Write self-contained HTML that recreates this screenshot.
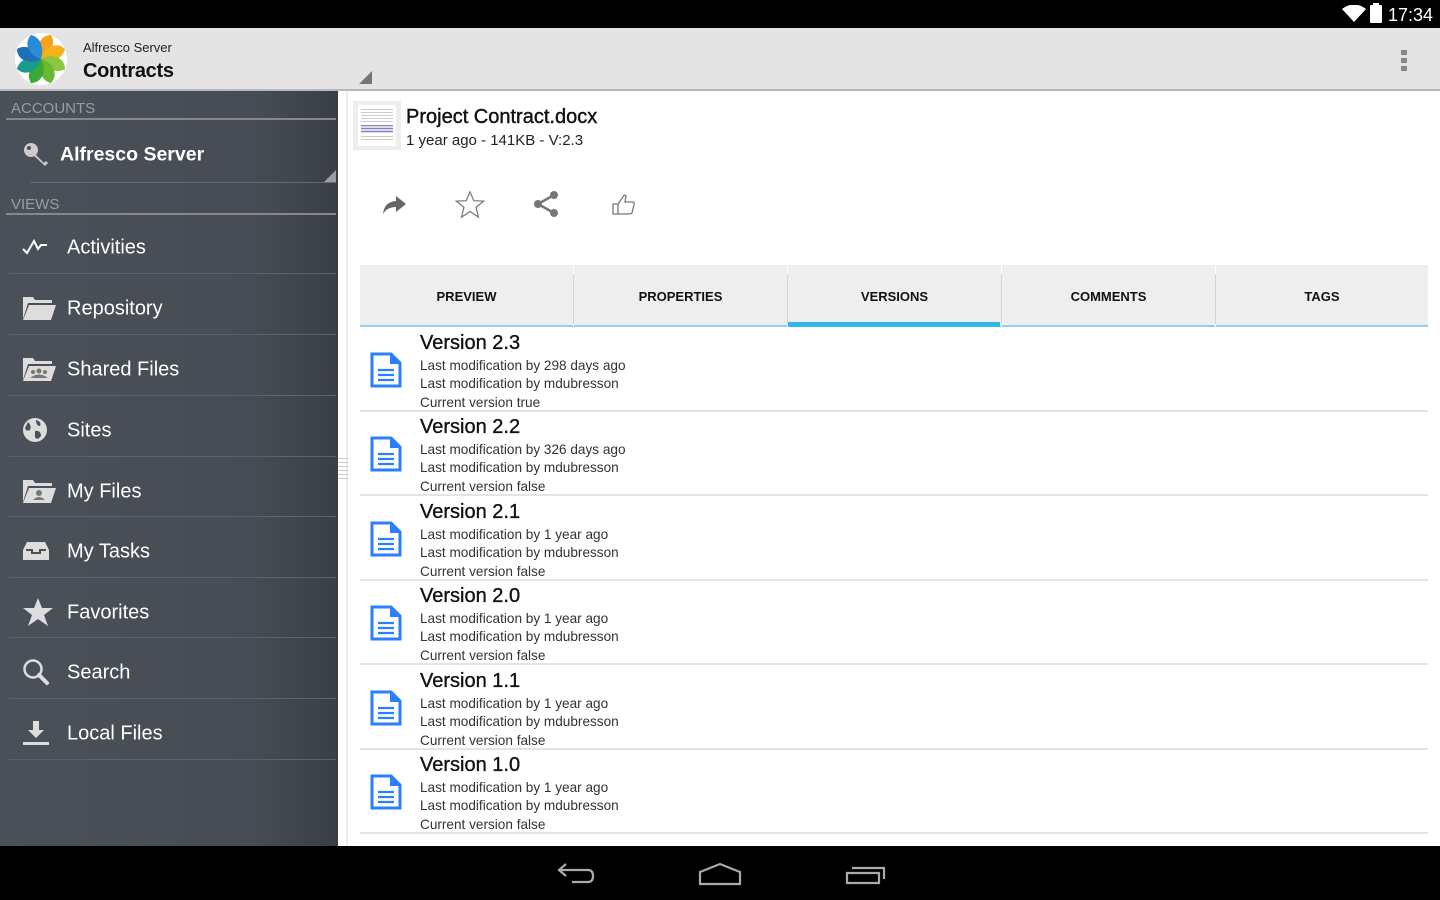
<!DOCTYPE html>
<html><head><meta charset="utf-8"><style>
*{margin:0;padding:0;box-sizing:border-box}
body{width:1440px;height:900px;overflow:hidden;position:relative;font-family:"Liberation Sans",sans-serif;background:#fff}
.a{position:absolute}
#status{left:0;top:0;width:1440px;height:28px;background:#000}
#bar{left:0;top:28px;width:1440px;height:63px;background:#e4e4e4;border-bottom:2px solid #b8b8b8}
#side{left:0;top:91px;width:338px;height:755px;background:linear-gradient(90deg,#4b5159 0%,#474c54 75%,#3a3e45 100%)}
.sec{color:#9a9ea4;font-size:15px;left:11px}
.hl{left:6px;width:330px;height:2px;background:#85898f}
.item{left:0;width:338px;height:61px;color:#fff;font-size:20px}
.item span{position:absolute;left:67px;top:50%;transform:translateY(-45%)}
.item svg{position:absolute;left:22px;top:50%;transform:translateY(-50%)}
.sep{left:9px;width:327px;height:1px;background:#5d636b}
#gut{left:338px;top:91px;width:10px;height:755px;background:#fff;border-right:2px solid #ececec}
#nav{left:0;top:846px;width:1440px;height:54px;background:#000}
.tab{top:265px;height:62px;width:213px;background:#eee;font-size:13px;font-weight:bold;color:#111;text-align:center;line-height:64px}
.tab:after{content:"";position:absolute;left:0;right:0;bottom:0;height:2px;background:#8ed0ee}
.ver{left:360px;width:1068px;height:84px;border-bottom:2px solid #e4e4e4}
.ver .t{position:absolute;left:60px;top:4px;font-size:20px;color:#111;-webkit-text-stroke:.35px #111}
.ver .l{position:absolute;left:60px;font-size:13.6px;color:#333}
.ver svg{position:absolute;left:10px;top:24px}
</style></head><body>
<div class="a" id="status"></div>
<svg class="a" style="left:1342px;top:5px" width="24" height="18" viewBox="0 0 24 18"><path d="M12 17L0 4Q12-5 24 4Z" fill="#fff"/></svg>
<div class="a" style="left:1370px;top:5px;width:12px;height:18px;background:#fff;border-radius:1px"></div>
<div class="a" style="left:1373px;top:3px;width:6px;height:3px;background:#fff"></div>
<div class="a" style="left:1388px;top:5px;color:#fff;font-size:18px">17:34</div>

<div class="a" id="bar"></div>
<svg class="a" style="left:14px;top:32px" width="54" height="54" viewBox="-27 -27 54 54">
<circle r="26" fill="#fff"/>
<g>
<path d="M0 0 C-6 -10 -2 -24 10 -24 C16 -14 8 -4 0 0Z" fill="#f5a31a"/>
<path d="M0 0 C-6 -10 -2 -24 10 -24 C16 -14 8 -4 0 0Z" fill="#f5b21a" transform="rotate(45)"/>
<path d="M0 0 C-6 -10 -2 -24 10 -24 C16 -14 8 -4 0 0Z" fill="#8cc63f" transform="rotate(90)"/>
<path d="M0 0 C-6 -10 -2 -24 10 -24 C16 -14 8 -4 0 0Z" fill="#6ab82d" transform="rotate(135)"/>
<path d="M0 0 C-6 -10 -2 -24 10 -24 C16 -14 8 -4 0 0Z" fill="#3aa935" transform="rotate(180)"/>
<path d="M0 0 C-6 -10 -2 -24 10 -24 C16 -14 8 -4 0 0Z" fill="#1a9c8c" transform="rotate(225)"/>
<path d="M0 0 C-6 -10 -2 -24 10 -24 C16 -14 8 -4 0 0Z" fill="#1d6fb8" transform="rotate(270)"/>
<path d="M0 0 C-6 -10 -2 -24 10 -24 C16 -14 8 -4 0 0Z" fill="#2a8dd4" transform="rotate(315)"/>
</g></svg>
<div class="a" style="left:83px;top:40px;font-size:13px;color:#222">Alfresco Server</div>
<div class="a" style="left:83px;top:60px;font-size:20px;font-weight:bold;color:#111;letter-spacing:-0.3px">Contracts</div>
<svg class="a" style="left:359px;top:71px" width="13" height="13"><path d="M13 0V13H0Z" fill="#777"/></svg>
<div class="a" style="left:1401px;top:50px;width:6px;height:5px;background:#888"></div>
<div class="a" style="left:1401px;top:58px;width:6px;height:5px;background:#888"></div>
<div class="a" style="left:1401px;top:66px;width:6px;height:5px;background:#888"></div>

<div class="a" id="side"></div>
<div class="a sec" style="top:100px">ACCOUNTS</div>
<div class="a hl" style="top:118px"></div>
<div class="a item" style="top:123px;font-weight:bold;font-size:19.5px"><svg width="26" height="26" viewBox="0 0 26 26"><circle cx="9" cy="9" r="7" fill="#ccc"/><path d="M12 12L22 22L24 20L26 22L23 25L11 14Z" fill="#ccc"/><circle cx="7" cy="7" r="2" fill="#4b5159"/></svg><span style="left:60px">Alfresco Server</span></div>
<div class="a sep" style="top:182px;left:30px;width:306px;background:#666c73"></div>
<svg class="a" style="left:324px;top:170px" width="12" height="12"><path d="M12 0V12H0Z" fill="#9a9ea4"/></svg>
<div class="a sec" style="top:196px">VIEWS</div>
<div class="a hl" style="top:213px"></div>

<div class="a item" style="top:216px"><svg width="26" height="20" viewBox="0 0 26 20"><path d="M1 12L5 16L12 4L16 12L19 8H25" stroke="#fff" stroke-width="2" fill="none"/></svg><span>Activities</span></div>
<div class="a sep" style="top:273px"></div>
<div class="a item" style="top:277px"><svg width="34" height="24" viewBox="0 0 34 24"><path d="M1 1H11L13 4H30V7H6L1 23Z" fill="#ddd"/><path d="M7 9H34L29 24H1Z" fill="#ddd"/></svg><span>Repository</span></div>
<div class="a sep" style="top:334px"></div>
<div class="a item" style="top:338px"><svg width="34" height="24" viewBox="0 0 34 24"><path d="M1 1H11L13 4H30V7H6L1 23Z" fill="#ddd"/><path d="M7 9H34L29 24H1Z" fill="#ddd"/><circle cx="17" cy="14" r="2.5" fill="#777"/><circle cx="11" cy="15" r="2" fill="#777"/><circle cx="23" cy="15" r="2" fill="#777"/><path d="M8 21Q17 14 26 21Z" fill="#777"/></svg><span>Shared Files</span></div>
<div class="a sep" style="top:395px"></div>
<div class="a item" style="top:399px"><svg width="26" height="26" viewBox="0 0 26 26"><circle cx="13" cy="13" r="12" fill="#ddd"/><path d="M6 5Q10 9 8 13Q4 15 3 11Z M14 3Q20 5 18 9Q14 9 14 3Z M13 14Q19 13 19 19Q15 24 13 20Z" fill="#4b5159"/></svg><span>Sites</span></div>
<div class="a sep" style="top:456px"></div>
<div class="a item" style="top:460px"><svg width="34" height="24" viewBox="0 0 34 24"><path d="M1 1H11L13 4H30V7H6L1 23Z" fill="#ddd"/><path d="M7 9H34L29 24H1Z" fill="#ddd"/><circle cx="17" cy="14" r="3" fill="#777"/><path d="M11 21Q17 15 23 21Z" fill="#777"/></svg><span>My Files</span></div>
<div class="a sep" style="top:516px"></div>
<div class="a item" style="top:520px"><svg width="28" height="20" viewBox="0 0 28 20"><path d="M5 1H23L27 9V19H1V9Z" fill="#ddd"/><path d="M4 9H10V12H18V9H24" stroke="#4b5159" stroke-width="2" fill="none"/></svg><span>My Tasks</span></div>
<div class="a sep" style="top:577px"></div>
<div class="a item" style="top:581px"><svg width="32" height="30" viewBox="0 0 32 30"><path d="M16 1L20 11L31 11L22 18L26 29L16 22L6 29L10 18L1 11L12 11Z" fill="#ddd"/></svg><span>Favorites</span></div>
<div class="a sep" style="top:637px"></div>
<div class="a item" style="top:641px"><svg width="28" height="28" viewBox="0 0 28 28"><circle cx="11" cy="11" r="8.5" stroke="#ddd" stroke-width="2.5" fill="none"/><path d="M17 17L25 25" stroke="#ddd" stroke-width="4" stroke-linecap="round"/></svg><span>Search</span></div>
<div class="a sep" style="top:698px"></div>
<div class="a item" style="top:702px"><svg width="28" height="26" viewBox="0 0 28 26"><path d="M11 1H17V10H22L14 18L6 10H11Z" fill="#ddd"/><rect x="1" y="22" width="26" height="3" fill="#ddd"/></svg><span>Local Files</span></div>
<div class="a sep" style="top:759px"></div>

<div class="a" id="gut"></div>
<div class="a" style="left:338px;top:458px;width:10px;height:22px;background:repeating-linear-gradient(#ccc 0 1px,transparent 1px 4px)"></div>

<div class="a" style="left:353px;top:101px;width:48px;height:49px;background:#eee;padding:4px 5px"><div style="width:100%;height:100%;background:#fff;padding:4px 3px"><div style="height:13px;background:repeating-linear-gradient(#ccc 0 1px,transparent 1px 3px)"></div><div style="height:8px;margin-top:3px;background:repeating-linear-gradient(#8080d0 0 1px,#ddd 1px 3px)"></div><div style="height:5px;margin-top:3px;background:repeating-linear-gradient(#ccc 0 1px,transparent 1px 3px)"></div></div></div>
<div class="a" style="left:406px;top:106px;font-size:20px;color:#111;-webkit-text-stroke:.4px #111">Project Contract.docx</div>
<div class="a" style="left:406px;top:132px;font-size:15px;color:#222">1 year ago - 141KB - V:2.3</div>

<svg class="a" style="left:381px;top:193px" width="26" height="24" viewBox="0 0 26 24"><path d="M15 3L25 11L15 19V14Q6 14 2 21Q3 9 15 8Z" fill="#666"/></svg>
<svg class="a" style="left:455px;top:189px" width="30" height="30" viewBox="0 0 32 30"><path d="M16 2L20 11.5L30.5 12L22.5 18.5L25 29L16 23L7 29L9.5 18.5L1.5 12L12 11.5Z" fill="none" stroke="#777" stroke-width="1.3"/></svg>
<svg class="a" style="left:533px;top:190px" width="28" height="28" viewBox="0 0 28 28"><path d="M5 14L21 5M5 14L21 23" stroke="#777" stroke-width="2.5"/><circle cx="5" cy="14" r="4" fill="#777"/><circle cx="21" cy="5" r="4" fill="#777"/><circle cx="21" cy="23" r="4" fill="#777"/></svg>
<svg class="a" style="left:612px;top:194px" width="24" height="22" viewBox="0 0 24 22"><path d="M1 10H6V20H1Z M6 10L11 3Q12 0 14 2L13 8H21Q23 9 22 11L20 19Q19 20 17 20H6" fill="none" stroke="#777" stroke-width="1.3"/></svg>

<div class="a tab" style="left:360px">PREVIEW</div>
<div class="a tab" style="left:574px">PROPERTIES</div>
<div class="a tab" style="left:788px">VERSIONS</div>
<div class="a tab" style="left:1002px">COMMENTS</div>
<div class="a tab" style="left:1216px;width:212px">TAGS</div>
<div class="a" style="left:573px;top:274px;width:1px;height:50px;background:#d4d4d4"></div>
<div class="a" style="left:787px;top:274px;width:1px;height:50px;background:#d4d4d4"></div>
<div class="a" style="left:1001px;top:274px;width:1px;height:50px;background:#d4d4d4"></div>
<div class="a" style="left:1215px;top:274px;width:1px;height:50px;background:#d4d4d4"></div>
<div class="a" style="left:788px;top:322px;width:212px;height:5px;background:#33b5e5"></div>

<div class="a ver" style="top:328px"><svg width="32" height="36" viewBox="0 0 32 36"><path d="M2 2H21L30 11V34H2Z" fill="#fff" stroke="#2a7fff" stroke-width="3"/><path d="M20 2V12H30Z" fill="#2a7fff"/><path d="M8 18H24M8 23H24M8 28H24" stroke="#2a7fff" stroke-width="2.2"/></svg><div class="t">Version 2.3</div><div class="l" style="top:30px">Last modification by 298 days ago</div><div class="l" style="top:48px">Last modification by mdubresson</div><div class="l" style="top:67px">Current version true</div></div>
<div class="a ver" style="top:412px"><svg width="32" height="36" viewBox="0 0 32 36"><path d="M2 2H21L30 11V34H2Z" fill="#fff" stroke="#2a7fff" stroke-width="3"/><path d="M20 2V12H30Z" fill="#2a7fff"/><path d="M8 18H24M8 23H24M8 28H24" stroke="#2a7fff" stroke-width="2.2"/></svg><div class="t">Version 2.2</div><div class="l" style="top:30px">Last modification by 326 days ago</div><div class="l" style="top:48px">Last modification by mdubresson</div><div class="l" style="top:67px">Current version false</div></div>
<div class="a ver" style="top:497px"><svg width="32" height="36" viewBox="0 0 32 36"><path d="M2 2H21L30 11V34H2Z" fill="#fff" stroke="#2a7fff" stroke-width="3"/><path d="M20 2V12H30Z" fill="#2a7fff"/><path d="M8 18H24M8 23H24M8 28H24" stroke="#2a7fff" stroke-width="2.2"/></svg><div class="t">Version 2.1</div><div class="l" style="top:30px">Last modification by 1 year ago</div><div class="l" style="top:48px">Last modification by mdubresson</div><div class="l" style="top:67px">Current version false</div></div>
<div class="a ver" style="top:581px"><svg width="32" height="36" viewBox="0 0 32 36"><path d="M2 2H21L30 11V34H2Z" fill="#fff" stroke="#2a7fff" stroke-width="3"/><path d="M20 2V12H30Z" fill="#2a7fff"/><path d="M8 18H24M8 23H24M8 28H24" stroke="#2a7fff" stroke-width="2.2"/></svg><div class="t">Version 2.0</div><div class="l" style="top:30px">Last modification by 1 year ago</div><div class="l" style="top:48px">Last modification by mdubresson</div><div class="l" style="top:67px">Current version false</div></div>
<div class="a ver" style="top:666px"><svg width="32" height="36" viewBox="0 0 32 36"><path d="M2 2H21L30 11V34H2Z" fill="#fff" stroke="#2a7fff" stroke-width="3"/><path d="M20 2V12H30Z" fill="#2a7fff"/><path d="M8 18H24M8 23H24M8 28H24" stroke="#2a7fff" stroke-width="2.2"/></svg><div class="t">Version 1.1</div><div class="l" style="top:30px">Last modification by 1 year ago</div><div class="l" style="top:48px">Last modification by mdubresson</div><div class="l" style="top:67px">Current version false</div></div>
<div class="a ver" style="top:750px"><svg width="32" height="36" viewBox="0 0 32 36"><path d="M2 2H21L30 11V34H2Z" fill="#fff" stroke="#2a7fff" stroke-width="3"/><path d="M20 2V12H30Z" fill="#2a7fff"/><path d="M8 18H24M8 23H24M8 28H24" stroke="#2a7fff" stroke-width="2.2"/></svg><div class="t">Version 1.0</div><div class="l" style="top:30px">Last modification by 1 year ago</div><div class="l" style="top:48px">Last modification by mdubresson</div><div class="l" style="top:67px">Current version false</div></div>

<div class="a" id="nav"></div>
<svg class="a" style="left:556px;top:862px" width="40" height="24" viewBox="0 0 40 24"><path d="M10 2L3 8L10 14M3 8H32Q37 8 37 14Q37 20 32 20H16" stroke="#aaa" stroke-width="2.2" fill="none"/></svg>
<svg class="a" style="left:698px;top:862px" width="44" height="24" viewBox="0 0 44 24"><path d="M2 22V10L22 2L42 10V22Z" stroke="#aaa" stroke-width="2.2" fill="none"/></svg>
<svg class="a" style="left:844px;top:863px" width="42" height="22" viewBox="0 0 42 22"><path d="M3 10H35V20H3Z" stroke="#aaa" stroke-width="2.2" fill="none"/><path d="M8 5H40V16" stroke="#aaa" stroke-width="2.2" fill="none"/></svg>
</body></html>
